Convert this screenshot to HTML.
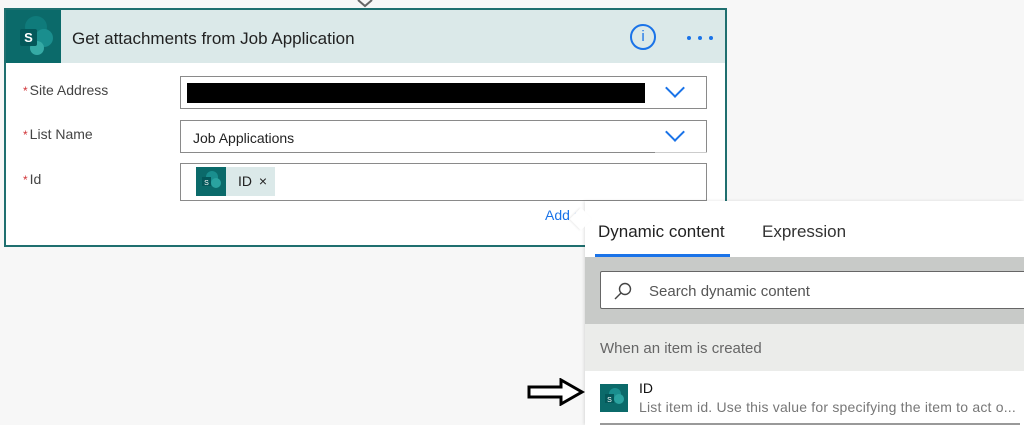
<!DOCTYPE html>
<html><head><meta charset="utf-8"><style>
*{box-sizing:border-box;margin:0;padding:0}
body{width:1024px;height:425px;overflow:hidden;background:#f7f7f7;font-family:"Liberation Sans",sans-serif;position:relative}
.abs{position:absolute}
.card{left:4px;top:8px;width:723px;height:239px;border:2px solid #1f6f6f;background:#fff}
.hdr{left:0;top:0;width:719px;height:53px;background:#dbe9e9}
.ico{left:0;top:0;width:55px;height:53px;background:#0b6a6a}
.lbl{font-size:14px;color:#444}
.lbl b{color:#d13438;font-weight:normal;font-size:12px;margin-right:2px}
.inp{border:1px solid #8a8a8a;background:#fff}
.chev{width:14px;height:14px;border-right:2px solid #1a73e8;border-bottom:2px solid #1a73e8;transform:rotate(45deg)}
.dot{width:4px;height:4px;border-radius:50%;background:#1a73e8;top:26px}
</style></head><body>
<svg class="abs" style="left:356px;top:0" width="18" height="8"><path d="M2 0 L9 6 L16 0" fill="none" stroke="#666" stroke-width="2"/></svg>
<div class="abs card">
 <div class="abs hdr"></div>
 <div class="abs ico">
  <svg width="55" height="53" viewBox="0 0 55 53"><circle cx="30" cy="17" r="11" fill="#0f7b7b"/><circle cx="38" cy="28" r="9" fill="#1a8e8e"/><circle cx="31" cy="38" r="7" fill="#35aaa5"/><rect x="14" y="19" width="17" height="17" rx="2" fill="#04585a"/><text x="22.5" y="32" font-size="13" fill="#fff" text-anchor="middle" font-family="Liberation Sans" font-weight="bold">S</text></svg>
 </div>
 <div class="abs" style="left:66px;top:19px;font-size:17px;color:#222">Get attachments from Job Application</div>
 <div class="abs" style="left:624px;top:14px;width:26px;height:26px;border:2px solid #1a73e8;border-radius:50%;color:#1a73e8;font-size:15px;text-align:center;line-height:22px">i</div>
 <div class="abs dot" style="left:681px"></div><div class="abs dot" style="left:692px"></div><div class="abs dot" style="left:703px"></div>
 <div class="abs lbl" style="left:17px;top:72px"><b>*</b>Site Address</div>
 <div class="abs inp" style="left:174px;top:66px;width:527px;height:33px"><div class="abs" style="left:6px;top:6px;width:458px;height:20px;background:#000"></div><div class="abs chev" style="left:487px;top:4px"></div></div>
 <div class="abs lbl" style="left:17px;top:116px"><b>*</b>List Name</div>
 <div class="abs inp" style="left:174px;top:110px;width:527px;height:33px"><div class="abs" style="left:12px;top:9px;font-size:14px;color:#222">Job Applications</div><div class="abs chev" style="left:487px;top:4px"></div><div class="abs" style="left:474px;top:31px;width:52px;height:1px;background:#ccc"></div></div>
 <div class="abs lbl" style="left:17px;top:161px"><b>*</b>Id</div>
 <div class="abs inp" style="left:174px;top:153px;width:527px;height:38px">
  <div class="abs" style="left:15px;top:3px;width:30px;height:29px;background:#0b6a6a"><svg width="30" height="29"><circle cx="16" cy="10" r="6" fill="#1a8e8e"/><circle cx="20" cy="16" r="5" fill="#2aa3a0"/><rect x="6" y="10" width="9" height="9" fill="#04585a"/><text x="10.5" y="18" font-size="7" fill="#fff" text-anchor="middle">S</text></svg></div>
  <div class="abs" style="left:45px;top:3px;width:49px;height:29px;background:#dbe9e9;font-size:14px;line-height:29px;padding-left:12px;color:#222">ID <span style="font-size:14px;margin-left:3px">×</span></div>
 </div>
 <div class="abs" style="left:539px;top:197px;font-size:14px;color:#1a73e8">Add d</div>
</div>
<div class="abs" style="left:585px;top:201px;width:439px;height:224px;background:#fff;box-shadow:-1px 0 3px rgba(0,0,0,.12)">
 <div class="abs" style="left:-12px;top:10px;width:16px;height:16px;background:#fff;transform:rotate(45deg);box-shadow:-1px 1px 2px rgba(0,0,0,.08)"></div>
 <div class="abs" style="left:13px;top:21px;font-size:17px;color:#222">Dynamic content</div>
 <div class="abs" style="left:177px;top:21px;font-size:17px;color:#333">Expression</div>
 <div class="abs" style="left:10px;top:53px;width:135px;height:3px;background:#1a73e8"></div>
 <div class="abs" style="left:0;top:56px;width:439px;height:67px;background:#c8cac8"></div>
 <div class="abs" style="left:15px;top:70px;width:430px;height:38px;background:#fff;border:1px solid #666;border-radius:2px">
  <svg class="abs" style="left:12px;top:9px" width="20" height="20"><circle cx="12" cy="8" r="5.5" fill="none" stroke="#444" stroke-width="1.4"/><line x1="8" y1="12" x2="2" y2="18" stroke="#444" stroke-width="1.4"/></svg>
  <div class="abs" style="left:48px;top:11px;font-size:15px;color:#555">Search dynamic content</div>
 </div>
 <div class="abs" style="left:0;top:123px;width:439px;height:47px;background:#ebecea"></div>
 <div class="abs" style="left:15px;top:139px;font-size:15px;color:#666">When an item is created</div>
 <div class="abs" style="left:15px;top:183px;width:28px;height:28px;background:#0b6a6a"><svg width="28" height="28"><circle cx="15" cy="10" r="6" fill="#1a8e8e"/><circle cx="19" cy="15" r="5" fill="#2aa3a0"/><rect x="5" y="10" width="9" height="9" fill="#04585a"/><text x="9.5" y="18" font-size="7" fill="#fff" text-anchor="middle">S</text></svg></div>
 <div class="abs" style="left:54px;top:179px;font-size:14px;color:#111">ID</div>
 <div class="abs" style="left:54px;top:198px;font-size:14px;color:#777;white-space:nowrap;letter-spacing:0.2px">List item id. Use this value for specifying the item to act o...</div>
 <div class="abs" style="left:15px;top:222px;width:420px;height:2px;background:#999"></div>
</div>
<svg class="abs" style="left:527px;top:378px" width="58" height="28"><path d="M2 9 H34 V2 L55 14 L34 26 V19 H2 Z" fill="#fff" stroke="#000" stroke-width="3"/></svg>
</body></html>
